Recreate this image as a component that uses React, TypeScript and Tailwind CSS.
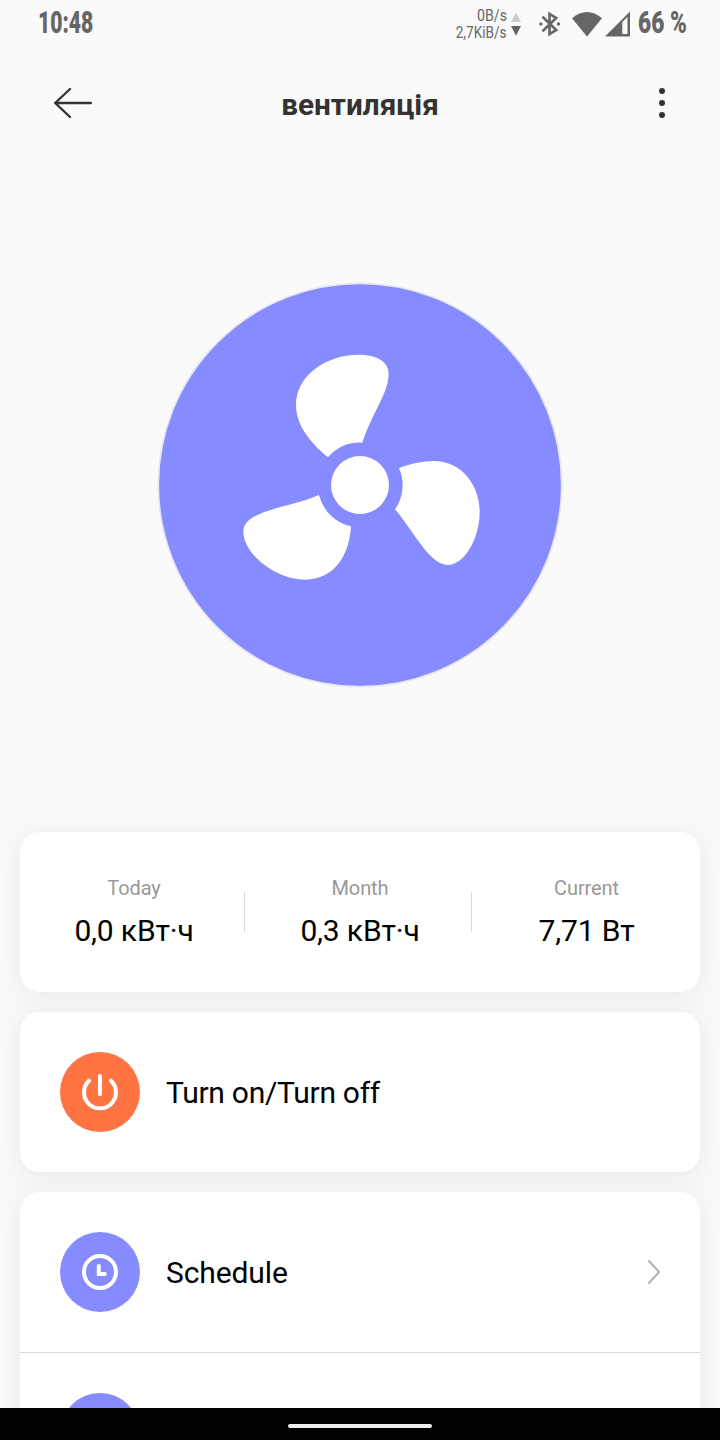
import type { ReactNode } from 'react';

const STATS = [
  { label: 'Today', value: '0,0 кВт·ч', width: 'w-[224px] pl-1' },
  { label: 'Month', value: '0,3 кВт·ч', width: 'w-[226px] pl-1' },
  { label: 'Current', value: '7,71 Вт', width: 'w-[228px] pl-px' },
];

function StatusBar() {
  return (
    <div className="flex h-12 shrink-0 items-start pl-[38px] text-[#666]">
      <div className="mt-[5px] w-14 text-[32px] leading-[34px] font-black whitespace-nowrap">
        <span className="inline-block origin-left scale-x-[0.66]">10:48</span>
      </div>
      <div className="mt-[7px] ml-[353px] flex w-[60px] flex-col items-end text-[17px] leading-[17px] whitespace-nowrap">
        <span className="origin-right scale-x-[0.83]">0B/s</span>
        <span className="origin-right scale-x-[0.8]">2,7KiB/s</span>
      </div>
      <svg className="mt-3 ml-1 shrink-0" width="10" height="24" viewBox="0 0 10 24">
        <path d="M0 10 5 0.5 10 10z" fill="#ccc" />
        <path d="M0 14h10L5 23.7z" fill="#666" />
      </svg>
      <svg className="mt-[11px] ml-[18px] shrink-0" width="22" height="26" viewBox="0 0 22 26" fill="none">
        <path d="M3.5 20.3 17.2 7 10.5 2.8v20.4L17.2 19 3.5 5.7" stroke="#666" strokeWidth="2.6" />
        <circle cx="1.9" cy="13" r="1.7" fill="#666" />
        <circle cx="19.5" cy="13" r="1.7" fill="#666" />
      </svg>
      <svg className="mt-[11px] ml-[11px] shrink-0" width="30" height="26" viewBox="0 0 30 26">
        <path d="M0 7.3Q15-5.4 30 7.3L15 25.4z" fill="#666" />
      </svg>
      <svg className="mt-[11px] ml-[3px] shrink-0" width="25" height="26" viewBox="0 0 25 26">
        <path d="M0 25.6 25 0.6v25zM17.3 11v12h5.2V6z" fill="#666" fillRule="evenodd" />
      </svg>
      <div className="mt-[5px] ml-2 flex w-[52px] text-[32px] leading-[34px] font-black whitespace-nowrap">
        <span className="inline-block origin-left scale-x-[0.71]">66 %</span>
      </div>
    </div>
  );
}

function Header() {
  return (
    <header className="flex h-[110px] shrink-0 items-center justify-between px-[52px]">
      <svg width="42" height="32" viewBox="0 0 42 32" fill="none" stroke="#333" strokeWidth="2.4" strokeLinecap="round" strokeLinejoin="round">
        <path d="M18 2 3.2 16 18 30M3.2 16h35.6" />
      </svg>
      <h1 className="mt-1 text-[29.7px] leading-8 font-bold text-[#333]">вентиляція</h1>
      <svg width="42" height="32" viewBox="0 0 42 32" fill="#333">
        <circle cx="36" cy="4" r="3" />
        <circle cx="36" cy="16" r="3" />
        <circle cx="36" cy="28" r="3" />
      </svg>
    </header>
  );
}

function Fan() {
  return (
    <svg className="mx-auto mt-[124px] shrink-0" width="406" height="406" viewBox="-219 -174 1218 1218">
      <circle cx="390" cy="435" r="605" fill="#868bff" stroke="#e6e6f2" strokeWidth="5" />
      <g fill="#fff">
        <circle cx="390" cy="435" r="87" />
        <path d="M294 352C240 307 198 255 198 195C198 105 290 44 385 44C440 44 476 65 476 100C476 160 428 215 397 308A127 127 0 0 0 294 352z" />
        <path d="M507 384C540 372 575 363 612 363C690 363 749 430 749 515C749 600 700 675 653 675C600 675 555 580 495 508A127 127 0 0 0 507 384z" />
        <path d="M363 559C358 650 310 719 225 719C135 719 40 640 40 575C40 510 175 505 267 465A127 127 0 0 0 363 559z" />
      </g>
    </svg>
  );
}

// The white face sits above the shadows of the neighbouring cards.
function Card({ children }: { children: ReactNode }) {
  return (
    <section className="rounded-[20px] shadow-[0_4px_26px_1px_rgba(0,0,0,0.075)]">
      <div className="relative z-10 rounded-[20px] bg-white">{children}</div>
    </section>
  );
}

function Row({ icon, label, color, arrow }: { icon: ReactNode; label?: ReactNode; color: string; arrow?: boolean }) {
  return (
    <div className="flex h-40 items-center px-10">
      <div className={`flex size-20 items-center justify-center rounded-full ${color}`}>
        <svg width="40" height="40" viewBox="0 0 40 40" fill="none" stroke="#fff" strokeWidth="4" strokeLinecap="round">
          {icon}
        </svg>
      </div>
      <span className="mt-0.5 ml-[26px] flex-1 text-[30px] leading-9 text-black">{label}</span>
      {arrow && (
        <svg width="13" height="26" viewBox="0 0 13 26" fill="none" stroke="#b3b3b3" strokeWidth="2" strokeLinecap="round">
          <path d="M2 2 12 13 2 24" />
        </svg>
      )}
    </div>
  );
}

export default function App() {
  return (
    <div className="flex h-[1440px] w-[720px] flex-col overflow-hidden bg-[#fafafa] font-['Roboto',sans-serif]">
      <StatusBar />
      <Header />
      <Fan />
      <main className="mt-36 flex h-[576px] shrink-0 flex-col gap-5 px-5">
        <Card>
          <div className="flex h-40">
            {STATS.map((s, i) => (
              <div key={s.label} className="flex">
                {i > 0 && <div className="mt-[60px] h-10 w-px bg-[#d9d9d9]" />}
                <div className={`flex flex-col items-center pt-11 ${s.width}`}>
                  <span className="text-[20px] leading-6 tracking-[-0.1px] text-[#999]">{s.label}</span>
                  <span className="mt-[13px] text-[30px] leading-9 tracking-[-0.15px] text-black">{s.value}</span>
                </div>
              </div>
            ))}
          </div>
        </Card>
        <Card>
          <Row
            color="bg-[#ff7440]"
            label={<span className="tracking-[-0.28px]">Turn on/Turn off</span>}
            icon={<path d="M9 8.7a16 16 0 1 0 22 0M20 4v18.3" />}
          />
        </Card>
        <Card>
          <Row
            color="bg-[#868bff]"
            label={<span className="tracking-[-0.1px]">Schedule</span>}
            arrow
            icon={
              <>
                <circle cx="20" cy="20" r="16" />
                <path d="M18.8 14v8h6" />
              </>
            }
          />
          <div className="h-px bg-[#d9d9d9]" />
          <Row color="bg-[#868bff]" arrow icon={<circle cx="20" cy="20" r="16" />} />
        </Card>
      </main>
      <nav className="relative z-20 flex h-8 shrink-0 items-center justify-center bg-black pt-1">
        <div className="h-1 w-36 rounded-full bg-[#eee]" />
      </nav>
    </div>
  );
}
